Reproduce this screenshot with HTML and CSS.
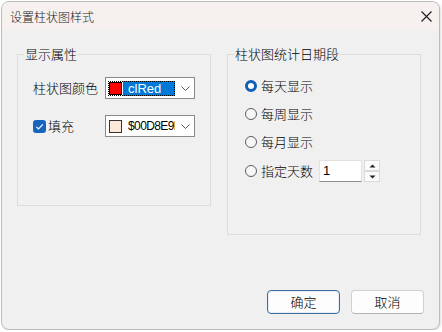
FILE: index.html
```html
<!DOCTYPE html>
<html>
<head>
  <meta charset="utf-8">
  <link rel="stylesheet" href="styles.css">
</head>
<body>
  <div class="window">
    <div class="titlebar">
      <div class="title">设置柱状图样式</div>
      <div class="close">
        <svg width="11" height="11" viewBox="0 0 11 11"><path d="M0.5 0.5 L10.5 10.5 M10.5 0.5 L0.5 10.5" stroke="#1b1b1b" stroke-width="1.1" fill="none"/></svg>
      </div>
    </div>

    <div class="content">
      <fieldset class="group group-style">
        <legend>显示属性</legend>
        <div class="form-grid">
          <span class="label">柱状图颜色</span>
          <div class="combo">
            <div class="combo-value focused">
              <span class="swatch red"></span>
              <span class="combo-text selected">clRed</span>
            </div>
            <svg class="chevron" width="9" height="5" viewBox="0 0 9 5"><path d="M0.5 0.5 L4.5 4.5 L8.5 0.5" stroke="#555" stroke-width="1" fill="none"/></svg>
          </div>

          <label class="check">
            <span class="checkbox">
              <svg width="13" height="13" viewBox="0 0 13 13"><path d="M3.3 6.8 L5.5 9 L9.8 4.4" stroke="#fff" stroke-width="1.2" fill="none"/></svg>
            </span>
            <span>填充</span>
          </label>
          <div class="combo">
            <div class="combo-value">
              <span class="swatch peach"></span>
              <span class="combo-text">$00D8E9F</span>
            </div>
            <svg class="chevron" width="9" height="5" viewBox="0 0 9 5"><path d="M0.5 0.5 L4.5 4.5 L8.5 0.5" stroke="#555" stroke-width="1" fill="none"/></svg>
          </div>
        </div>
      </fieldset>

      <fieldset class="group group-period">
        <legend>柱状图统计日期段</legend>
        <div class="radio-list">
          <div class="radio-row"><span class="radio checked"></span><span>每天显示</span></div>
          <div class="radio-row"><span class="radio"></span><span>每周显示</span></div>
          <div class="radio-row"><span class="radio"></span><span>每月显示</span></div>
          <div class="radio-row">
            <span class="radio"></span><span>指定天数</span>
            <div class="edit">1</div>
            <div class="spin">
              <div class="spin-btn">
                <svg width="7" height="4" viewBox="0 0 7 4"><path d="M0.5 3.5 L3.5 0.5 L6.5 3.5 Z" fill="#222"/></svg>
              </div>
              <div class="spin-btn">
                <svg width="7" height="4" viewBox="0 0 7 4"><path d="M0.5 0.5 L3.5 3.5 L6.5 0.5 Z" fill="#222"/></svg>
              </div>
            </div>
          </div>
        </div>
      </fieldset>
    </div>

    <div class="footer">
      <button class="btn default">确定</button>
      <button class="btn">取消</button>
    </div>
  </div>
</body>
</html>
```

FILE: styles.css
```css
body {
  margin: 0;
  background: #ffffff;
  font-family: "Noto Sans", "Noto Sans CJK SC", sans-serif;
  font-size: 13px;
  color: #000;
}

.window {
  width: 437px;
  height: 327px;
  margin: 1px 0 0 1px;
  border: 1px solid #bcbcbc;
  border-radius: 8px;
  overflow: hidden;
  background: #f0f0f0;
  display: flex;
  flex-direction: column;
  box-shadow: 1px 1px 2px rgba(0,0,0,0.12);
}

.titlebar {
  height: 28px;
  flex-shrink: 0;
  background: #f6f0ef;
  display: flex;
  align-items: center;
  justify-content: space-between;
  padding: 0 7px 0 8px;
}

.title {
  font-family: "Noto Sans CJK SC", sans-serif;
  font-weight: 300;
  font-size: 12px;
  line-height: 14px;
  color: #1a1a1a;
  margin-top: 1px;
}

.close {
  display: flex;
  margin-top: 1px;
}

.content {
  display: flex;
  align-items: flex-start;
  gap: 16px;
  padding: 17px 0 0 15px;
}

.group {
  margin: 0;
  padding: 0;
  border: 1px solid #dcdcdc;
  box-sizing: border-box;
  min-width: 0;
  font-family: "Noto Sans CJK SC", sans-serif;
  font-weight: 300;
}

.group legend {
  line-height: 14px;
  padding: 0 1px;
  margin-left: 6px;
}

.group-style {
  width: 194px;
  height: 159px;
}

.group-period {
  width: 194px;
  height: 188px;
}

.form-grid {
  display: grid;
  grid-template-columns: 72px 90px;
  grid-auto-rows: 22px;
  row-gap: 16px;
  align-items: center;
  padding: 16px 0 0 15px;
}

.label {
  line-height: 14px;
}

.check {
  display: flex;
  align-items: center;
  gap: 2px;
  line-height: 14px;
}

.checkbox {
  width: 13px;
  height: 13px;
  border-radius: 3px;
  background: #1565c0;
  display: flex;
}

.combo {
  height: 22px;
  box-sizing: border-box;
  border: 1px solid #8a8a8a;
  background: #fff;
  display: flex;
  align-items: center;
  padding: 0 4px 0 2px;
  justify-content: space-between;
}

.combo-value {
  display: flex;
  align-items: center;
  width: 67px;
  height: 15px;
  overflow: hidden;
  box-sizing: border-box;
}

.combo-value.focused {
  outline: 1px dotted #000;
  outline-offset: -1px;
}

.swatch {
  width: 13px;
  height: 13px;
  box-sizing: border-box;
  border: 1px solid #000;
  flex-shrink: 0;
  margin-left: 1px;
}

.swatch.red {
  background: #ff0000;
}

.swatch.peach {
  background: #fde9d8;
  border-color: #333;
}

.combo-text {
  flex: 1;
  height: 100%;
  padding-left: 5px;
  font-family: "Liberation Sans", sans-serif;
  font-weight: normal;
  font-size: 13px;
  line-height: 15px;
  white-space: nowrap;
  overflow: hidden;
  margin-left: 1px;
}

.combo-text.selected {
  background: #0078d7;
  color: #fff;
}

.combo-value:not(.focused) .combo-text {
  font-size: 12px;
  letter-spacing: -0.6px;
  padding-left: 5px;
}

.chevron {
  flex-shrink: 0;
}

.radio-list {
  display: flex;
  flex-direction: column;
  gap: 6px;
  padding: 14px 0 0 17px;
}

.radio-row {
  display: flex;
  align-items: center;
  height: 22px;
  line-height: 14px;
}

.radio-row:last-child {
  margin-top: 1px;
}

.radio {
  width: 12px;
  height: 12px;
  box-sizing: border-box;
  border: 1px solid #5c5c5c;
  border-radius: 50%;
  background: #f7f7f7;
  margin-right: 4px;
  flex-shrink: 0;
}

.radio.checked {
  border: 3.5px solid #0f5fb8;
  background: #fff;
}

.edit {
  width: 43px;
  height: 22px;
  box-sizing: border-box;
  margin-left: 6px;
  border: 1px solid #e2e2e2;
  border-bottom-color: #8c8c8c;
  background: #fff;
  font-family: "Liberation Sans", sans-serif;
  font-weight: normal;
  font-size: 13px;
  line-height: 20px;
  padding-left: 3px;
}

.spin {
  display: flex;
  flex-direction: column;
  margin-left: 2px;
  height: 22px;
}

.spin-btn {
  width: 16px;
  height: 11px;
  box-sizing: border-box;
  border: 1px solid #dadada;
  background: #fbfbfb;
  display: flex;
  align-items: center;
  justify-content: center;
}

.footer {
  margin-top: auto;
  display: flex;
  justify-content: flex-end;
  gap: 11px;
  padding: 0 15px 15px 0;
}

.btn {
  width: 73px;
  height: 24px;
  box-sizing: border-box;
  border: 1px solid #d0d0d0;
  border-bottom-color: #b4b4b4;
  border-radius: 4px;
  background: #fdfdfd;
  font-family: "Noto Sans CJK SC", sans-serif;
  font-weight: 300;
  font-size: 13px;
  line-height: 14px;
  color: #000;
  padding: 0;
}

.btn.default {
  border: 1px solid #3d6d9e;
  box-shadow: inset 0 0 0 1px #e8eef5;
}
```
